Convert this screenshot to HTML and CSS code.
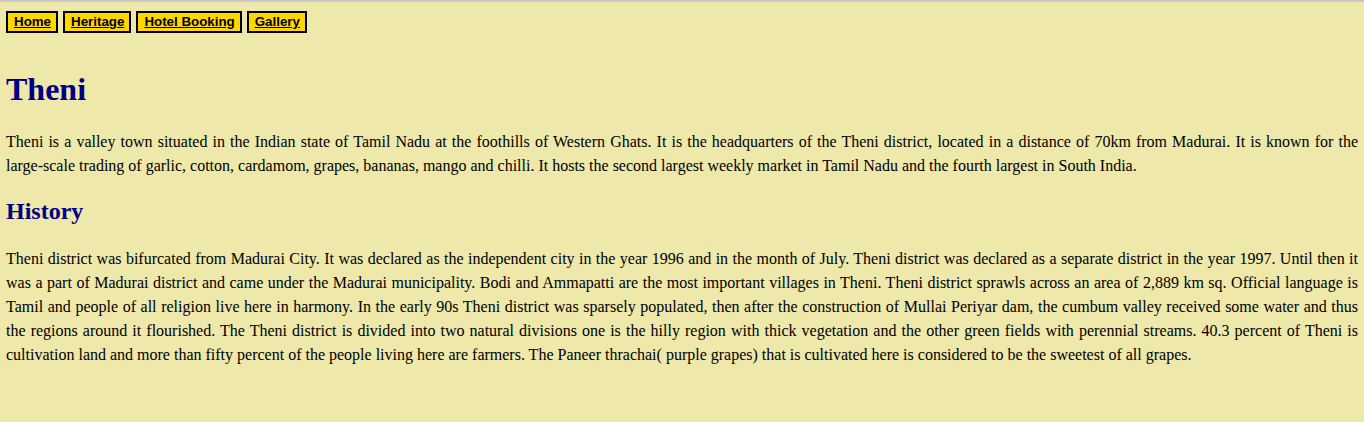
FILE: index.html
```html
<!DOCTYPE html>
<html>
<head>
<meta charset="utf-8">
<title>Theni</title>
<link rel="stylesheet" href="styles.css">
</head>
<body>
<nav class="nav">
  <a class="nav-link" href="#">Home</a>
  <a class="nav-link" href="#">Heritage</a>
  <a class="nav-link" href="#">Hotel Booking</a>
  <a class="nav-link" href="#">Gallery</a>
</nav>
<main class="content">
  <h1 class="title">Theni</h1>
  <p class="text">Theni is a valley town situated in the Indian state of Tamil Nadu at the foothills of Western Ghats. It is the headquarters of the Theni district, located in a distance of 70km from Madurai. It is known for the <span class="nowrap">large-scale</span> trading of garlic, cotton, cardamom, grapes, bananas, mango and chilli. It hosts the second largest weekly market in Tamil Nadu and the fourth largest in South India.</p>
  <h2 class="subtitle">History</h2>
  <p class="text">Theni district was bifurcated from Madurai City. It was declared as the independent city in the year 1996 and in the month of July. Theni district was declared as a separate district in the year 1997. Until then it was a part of Madurai district and came under the Madurai municipality. Bodi and Ammapatti are the most important villages in Theni. Theni district sprawls across an area of 2,889 km sq. Official language is Tamil and people of all religion live here in harmony. In the early 90s Theni district was sparsely populated, then after the construction of Mullai Periyar dam, the cumbum valley received some water and thus the regions around it flourished. The Theni district is divided into two natural divisions one is the hilly region with thick vegetation and the other green fields with perennial streams. 40.3 percent of Theni is cultivation land and more than fifty percent of the people living here are farmers. The Paneer thrachai( purple grapes) that is cultivated here is considered to be the sweetest of all grapes.</p>
</main>
</body>
</html>
```

FILE: styles.css
```css
html {
  background: #eee8aa;
}
body {
  margin: 0;
  padding: 9px 6px 0 6px;
  border-top: 2px solid #c8c8c8;
  background: #eee8aa;
  font-family: "Liberation Serif", "Times New Roman", serif;
  color: #000;
}
.nav {
  display: flex;
  gap: 5px;
}
.nav-link {
  display: inline-block;
  background: #ffd700;
  border: 2px solid #000;
  padding: 1px 5px 1px 6px;
  font-family: "Liberation Sans", Arial, sans-serif;
  font-size: 13.33px;
  font-weight: bold;
  color: #000;
  text-decoration: underline;
  line-height: 16px;
}
.title {
  margin: 38px 0 0 0;
  font-size: 32px;
  color: #000080;
  font-weight: bold;
  line-height: 37px;
}
.text {
  margin: 22px 0 0 0;
  font-size: 16px;
  line-height: 24px;
  text-align: justify;
}
.nowrap {
  white-space: nowrap;
}
.subtitle {
  margin: 19px 0 0 0;
  font-size: 24px;
  color: #000080;
  font-weight: bold;
  line-height: 28px;
}
```
